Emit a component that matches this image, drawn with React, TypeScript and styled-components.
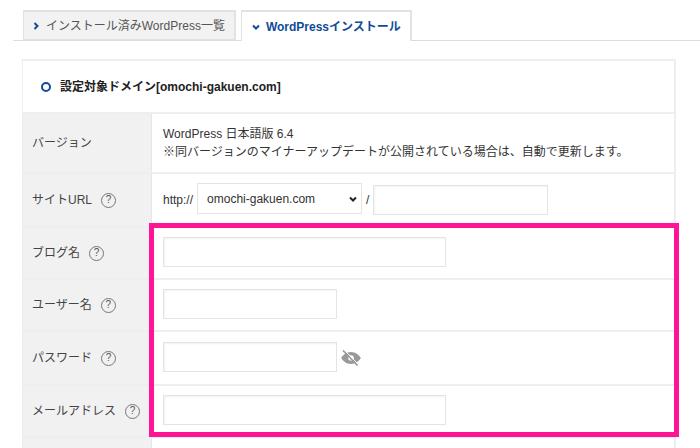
import * as React from 'react';
import styled, { createGlobalStyle } from 'styled-components';

const GlobalStyle = createGlobalStyle`
  html, body {
    margin: 0;
    padding: 0;
    background: #fff;
    overflow: hidden;
  }
  * {
    box-sizing: border-box;
  }
`;

const Page = styled.div`
  position: relative;
  width: 700px;
  height: 448px;
  overflow: hidden;
  padding-top: 10px;
  font: 12px/18px 'Liberation Sans', 'Noto Sans CJK JP', sans-serif;
  color: #333;
`;

const TabBar = styled.div`
  display: flex;
  gap: 5px;
  height: 31px;
  margin-left: 13px;
  padding-left: 10px;
  border-bottom: 1px solid #ddd;
`;

const Tab = styled.div<{ $active?: boolean }>`
  display: flex;
  align-items: center;
  gap: 6px;
  height: ${({ $active }) => ($active ? '31px' : '30px')};
  padding: 0 9px 0 ${({ $active }) => ($active ? '10px' : '8px')};
  border: 2px solid #e2e2e2;
  border-bottom: ${({ $active }) => ($active ? 'none' : '1px solid #e2e2e2')};
  border-left-width: 1px;
  background: ${({ $active }) => ($active ? '#fff' : '#f2f2f2')};
  color: ${({ $active }) => ($active ? '#0f4c96' : '#555')};
  font-weight: ${({ $active }) => ($active ? 700 : 400)};
  white-space: nowrap;
`;

const Panel = styled.div`
  width: 654px;
  margin: 18px 0 0 22px;
  border: 2px solid #eee;
  border-left-width: 1px;
  border-bottom: none;
`;

const PanelHead = styled.div`
  display: flex;
  align-items: center;
  gap: 9px;
  height: 51px;
  padding-left: 18px;
  font-weight: 700;
  color: #222;
`;

const Ring = styled.span`
  width: 10px;
  height: 10px;
  border: 2px solid #0f4c96;
  border-radius: 50%;
`;

const Row = styled.div<{ $height: number }>`
  display: flex;
  height: ${({ $height }) => $height}px;
  border-top: 2px solid #eee;
`;

const RowLabel = styled.div`
  display: flex;
  align-items: center;
  gap: 9px;
  flex: 0 0 129px;
  padding-left: 9px;
  background: #f1f1f1;
  border-right: 1px solid #e6e6e6;
  color: #444;
`;

const RowBody = styled.div`
  display: flex;
  align-items: center;
  gap: 4px;
  flex: 1;
  padding-left: 11px;
`;

const Help = styled.span`
  display: flex;
  align-items: center;
  justify-content: center;
  width: 15px;
  height: 15px;
  border: 1px solid #777;
  border-radius: 50%;
  font-size: 10px;
  line-height: 1;
  color: #555;
`;

const Field = styled.div<{ $width: number }>`
  width: ${({ $width }) => $width}px;
  height: 30px;
  margin-bottom: 2px;
  border: 1px solid #e4e4e4;
  box-shadow: inset 1px 1px 2px #f2f2f2;
  background: #fff;
`;

const SiteField = styled(Field)`
  margin-bottom: 0;
`;

const DomainSelect = styled.div`
  display: flex;
  align-items: center;
  justify-content: space-between;
  width: 165px;
  height: 31px;
  margin-bottom: 3px;
  padding: 0 4px 0 9px;
  border: 1px solid #e4e4e4;
  color: #333;
`;

const PasswordRow = styled.div`
  display: flex;
  align-items: center;
  gap: 4px;
`;

const Highlight = styled.div`
  position: absolute;
  left: 149px;
  top: 223px;
  width: 530px;
  height: 214px;
  border: 5px solid #ff1493;
`;

const Chevron = ({ open, color }: { open?: boolean; color: string }) => (
  <svg width="8" height="8" viewBox="0 0 8 8" fill="none" stroke={color} strokeWidth="2">
    <path d={open ? 'M1 2.5 L4 5.5 L7 2.5' : 'M2.5 1 L5.5 4 L2.5 7'} />
  </svg>
);

const EyeOff = () => (
  <svg width="20" height="16" viewBox="0 0 20 16">
    <path
      fill="#999"
      fillRule="evenodd"
      d="M10 2c4.4 0 8 2.9 9.8 6-1.8 3.1-5.4 6-9.8 6S2 11.1.2 8C2 4.9 5.6 2 10 2zM10 5.2a2.8 2.8 0 1 0 0 5.6 2.8 2.8 0 0 0 0-5.6z"
    />
    <path stroke="#fff" strokeWidth="1" d="M3.2 0 L18 15" />
    <path stroke="#999" strokeWidth="1.6" d="M2 0.5 L16.5 15.5" />
  </svg>
);

const App = () => (
  <Page>
    <GlobalStyle />
    <TabBar>
      <Tab>
        <Chevron color="#0f4c96" />
        インストール済みWordPress一覧
      </Tab>
      <Tab $active>
        <Chevron open color="#0f4c96" />
        WordPressインストール
      </Tab>
    </TabBar>
    <Panel>
      <PanelHead>
        <Ring />
        設定対象ドメイン[omochi-gakuen.com]
      </PanelHead>
      <Row $height={60}>
        <RowLabel>バージョン</RowLabel>
        <RowBody>
          <div>
            WordPress 日本語版 6.4
            <br />
            ※同バージョンのマイナーアップデートが公開されている場合は、自動で更新します。
          </div>
        </RowBody>
      </Row>
      <Row $height={54}>
        <RowLabel>
          サイトURL
          <Help>?</Help>
        </RowLabel>
        <RowBody>
          http://
          <DomainSelect>
            omochi-gakuen.com
            <Chevron open color="#222" />
          </DomainSelect>
          /
          <SiteField $width={175} />
        </RowBody>
      </Row>
      <Row $height={52}>
        <RowLabel>
          ブログ名
          <Help>?</Help>
        </RowLabel>
        <RowBody>
          <Field $width={283} />
        </RowBody>
      </Row>
      <Row $height={52}>
        <RowLabel>
          ユーザー名
          <Help>?</Help>
        </RowLabel>
        <RowBody>
          <Field $width={174} />
        </RowBody>
      </Row>
      <Row $height={54}>
        <RowLabel>
          パスワード
          <Help>?</Help>
        </RowLabel>
        <RowBody>
          <PasswordRow>
            <Field $width={174} />
            <EyeOff />
          </PasswordRow>
        </RowBody>
      </Row>
      <Row $height={52}>
        <RowLabel>
          メールアドレス
          <Help>?</Help>
        </RowLabel>
        <RowBody>
          <Field $width={283} />
        </RowBody>
      </Row>
      <Row $height={40}>
        <RowLabel />
        <RowBody />
      </Row>
    </Panel>
    <Highlight />
  </Page>
);

export default App;
